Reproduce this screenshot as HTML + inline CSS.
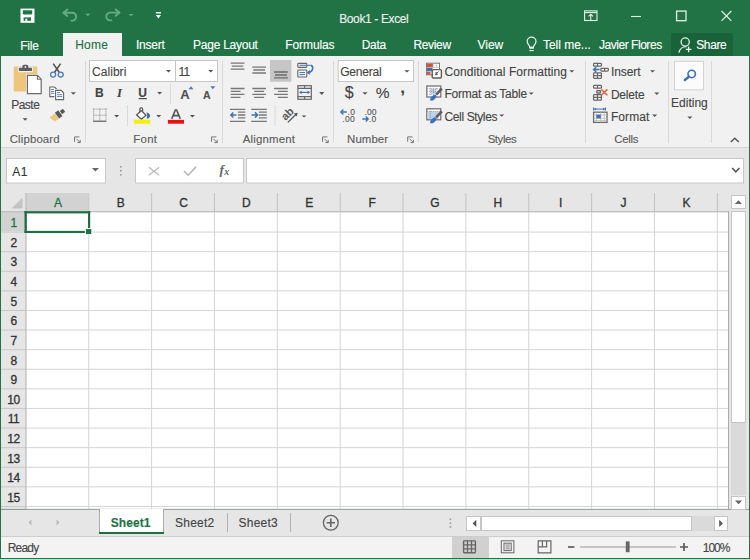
<!DOCTYPE html>
<html><head><meta charset="utf-8"><style>
html,body{margin:0;padding:0;width:750px;height:559px;overflow:hidden;}
body{position:relative;font-family:"Liberation Sans",sans-serif;}
svg{position:absolute;overflow:visible}
div{-webkit-text-stroke:0.12px currentColor}
</style></head><body>
<div style="position:absolute;left:0px;top:0px;width:750px;height:559px;background:#217346;"></div><div style="position:absolute;left:1px;top:56px;width:748px;height:91px;background:#f1f1f1;"></div><div style="position:absolute;left:63px;top:33px;width:59px;height:23px;background:#f1f1f1;"></div><div style="position:absolute;left:1px;top:147px;width:748px;height:1px;background:#d5d5d5;"></div><div style="position:absolute;left:1px;top:148px;width:748px;height:45px;background:#e6e6e6;"></div><div style="position:absolute;left:671px;top:33px;width:62px;height:23px;background:#1a6239;"></div><div style="position:absolute;left:1px;top:193px;width:748px;height:316px;background:#e6e6e6;"></div><div style="position:absolute;left:26px;top:212px;width:702px;height:297px;background:#ffffff;"></div><svg width="750" height="559" style="position:absolute;left:0;top:0"><rect x="26.50" y="212.30" width="702.00" height="297.00" fill="#ffffff"/><rect x="88.25" y="212.30" width="1.00" height="296.50" fill="#d4d4d4"/><rect x="151.11" y="212.30" width="1.00" height="296.50" fill="#d4d4d4"/><rect x="213.97" y="212.30" width="1.00" height="296.50" fill="#d4d4d4"/><rect x="276.83" y="212.30" width="1.00" height="296.50" fill="#d4d4d4"/><rect x="339.69" y="212.30" width="1.00" height="296.50" fill="#d4d4d4"/><rect x="402.55" y="212.30" width="1.00" height="296.50" fill="#d4d4d4"/><rect x="465.41" y="212.30" width="1.00" height="296.50" fill="#d4d4d4"/><rect x="528.27" y="212.30" width="1.00" height="296.50" fill="#d4d4d4"/><rect x="591.13" y="212.30" width="1.00" height="296.50" fill="#d4d4d4"/><rect x="653.99" y="212.30" width="1.00" height="296.50" fill="#d4d4d4"/><rect x="716.85" y="212.30" width="1.00" height="296.50" fill="#d4d4d4"/><rect x="26.50" y="231.55" width="702.00" height="1.00" fill="#d4d4d4"/><rect x="26.50" y="251.15" width="702.00" height="1.00" fill="#d4d4d4"/><rect x="26.50" y="270.75" width="702.00" height="1.00" fill="#d4d4d4"/><rect x="26.50" y="290.35" width="702.00" height="1.00" fill="#d4d4d4"/><rect x="26.50" y="309.95" width="702.00" height="1.00" fill="#d4d4d4"/><rect x="26.50" y="329.55" width="702.00" height="1.00" fill="#d4d4d4"/><rect x="26.50" y="349.15" width="702.00" height="1.00" fill="#d4d4d4"/><rect x="26.50" y="368.75" width="702.00" height="1.00" fill="#d4d4d4"/><rect x="26.50" y="388.35" width="702.00" height="1.00" fill="#d4d4d4"/><rect x="26.50" y="407.95" width="702.00" height="1.00" fill="#d4d4d4"/><rect x="26.50" y="427.55" width="702.00" height="1.00" fill="#d4d4d4"/><rect x="26.50" y="447.15" width="702.00" height="1.00" fill="#d4d4d4"/><rect x="26.50" y="466.75" width="702.00" height="1.00" fill="#d4d4d4"/><rect x="26.50" y="486.35" width="702.00" height="1.00" fill="#d4d4d4"/><rect x="26.50" y="505.95" width="702.00" height="1.00" fill="#d4d4d4"/><rect x="88.25" y="193.00" width="1.00" height="18.80" fill="#c2c2c2"/><rect x="151.11" y="193.00" width="1.00" height="18.80" fill="#c2c2c2"/><rect x="213.97" y="193.00" width="1.00" height="18.80" fill="#c2c2c2"/><rect x="276.83" y="193.00" width="1.00" height="18.80" fill="#c2c2c2"/><rect x="339.69" y="193.00" width="1.00" height="18.80" fill="#c2c2c2"/><rect x="402.55" y="193.00" width="1.00" height="18.80" fill="#c2c2c2"/><rect x="465.41" y="193.00" width="1.00" height="18.80" fill="#c2c2c2"/><rect x="528.27" y="193.00" width="1.00" height="18.80" fill="#c2c2c2"/><rect x="591.13" y="193.00" width="1.00" height="18.80" fill="#c2c2c2"/><rect x="653.99" y="193.00" width="1.00" height="18.80" fill="#c2c2c2"/><rect x="716.85" y="193.00" width="1.00" height="18.80" fill="#c2c2c2"/><rect x="1.00" y="231.55" width="25.00" height="1.00" fill="#c8c8c8"/><rect x="1.00" y="251.15" width="25.00" height="1.00" fill="#c8c8c8"/><rect x="1.00" y="270.75" width="25.00" height="1.00" fill="#c8c8c8"/><rect x="1.00" y="290.35" width="25.00" height="1.00" fill="#c8c8c8"/><rect x="1.00" y="309.95" width="25.00" height="1.00" fill="#c8c8c8"/><rect x="1.00" y="329.55" width="25.00" height="1.00" fill="#c8c8c8"/><rect x="1.00" y="349.15" width="25.00" height="1.00" fill="#c8c8c8"/><rect x="1.00" y="368.75" width="25.00" height="1.00" fill="#c8c8c8"/><rect x="1.00" y="388.35" width="25.00" height="1.00" fill="#c8c8c8"/><rect x="1.00" y="407.95" width="25.00" height="1.00" fill="#c8c8c8"/><rect x="1.00" y="427.55" width="25.00" height="1.00" fill="#c8c8c8"/><rect x="1.00" y="447.15" width="25.00" height="1.00" fill="#c8c8c8"/><rect x="1.00" y="466.75" width="25.00" height="1.00" fill="#c8c8c8"/><rect x="1.00" y="486.35" width="25.00" height="1.00" fill="#c8c8c8"/><rect x="1.00" y="505.95" width="25.00" height="1.00" fill="#c8c8c8"/><rect x="26.50" y="193.00" width="61.75" height="18.30" fill="#d2d2d2"/><rect x="1.00" y="212.30" width="25.00" height="18.75" fill="#d2d2d2"/><rect x="1.00" y="211.30" width="728.00" height="1.00" fill="#b0b0b0"/><rect x="25.50" y="193.00" width="1.00" height="316.00" fill="#b0b0b0"/><rect x="728.00" y="211.30" width="1.20" height="298.00" fill="#ababab"/><rect x="1.00" y="508.80" width="748.00" height="1.00" fill="#ababab"/><rect x="24.50" y="211.20" width="65.70" height="2.20" fill="#1e6e42"/><rect x="24.50" y="230.90" width="61.00" height="2.10" fill="#1e6e42"/><rect x="24.50" y="211.20" width="2.30" height="21.80" fill="#1e6e42"/><rect x="88.00" y="211.20" width="2.20" height="17.40" fill="#1e6e42"/><rect x="84.90" y="228.10" width="7.40" height="7.00" fill="#ffffff"/><rect x="85.90" y="229.10" width="5.40" height="5.00" fill="#1e6e42"/></svg><div style="position:absolute;left:729px;top:193px;width:19px;height:316px;background:#e6e6e6;"></div><div style="position:absolute;left:731px;top:211px;width:15px;height:212px;background:#ffffff;box-sizing:border-box;border:1px solid #c6c6c6"></div><div style="position:absolute;left:731px;top:423px;width:15px;height:72px;background:#dadada;"></div><div style="position:absolute;left:731px;top:195px;width:15px;height:14px;background:#ffffff;box-sizing:border-box;border:1px solid #c6c6c6"></div><div style="position:absolute;left:731px;top:496px;width:15px;height:14px;background:#ffffff;box-sizing:border-box;border:1px solid #c6c6c6"></div><div style="position:absolute;left:1px;top:510px;width:748px;height:26px;background:#e6e6e6;"></div><div style="position:absolute;left:99px;top:509px;width:65px;height:25px;background:#ababab;"></div><div style="position:absolute;left:100px;top:509px;width:63px;height:23px;background:#ffffff;"></div><div style="position:absolute;left:99px;top:532px;width:65px;height:2px;background:#1e6e42;"></div><div style="position:absolute;left:227px;top:513px;width:1px;height:19px;background:#b0b0b0;"></div><div style="position:absolute;left:290px;top:513px;width:1px;height:19px;background:#b0b0b0;"></div><div style="position:absolute;left:466px;top:516px;width:262px;height:15px;background:#dadada;"></div><div style="position:absolute;left:481px;top:516px;width:211px;height:15px;background:#ffffff;box-sizing:border-box;border:1px solid #c6c6c6"></div><div style="position:absolute;left:466px;top:516px;width:15px;height:15px;background:#ffffff;box-sizing:border-box;border:1px solid #c6c6c6"></div><div style="position:absolute;left:714px;top:516px;width:14px;height:15px;background:#ffffff;box-sizing:border-box;border:1px solid #c6c6c6"></div><div style="position:absolute;left:1px;top:537px;width:748px;height:21px;background:#f3f3f3;"></div><div style="position:absolute;left:1px;top:536px;width:748px;height:1px;background:#cdcdcd;"></div><div style="position:absolute;left:452px;top:537px;width:37px;height:21px;background:#d0d0d0;"></div><div style="position:absolute;left:37.9px;top:196px;width:40px;text-align:center;font-size:12px;line-height:14px;-webkit-text-stroke:0.3px currentColor;color:#217346">A</div><div style="position:absolute;left:100.7px;top:196px;width:40px;text-align:center;font-size:12px;line-height:14px;-webkit-text-stroke:0.3px currentColor;color:#333">B</div><div style="position:absolute;left:163.5px;top:196px;width:40px;text-align:center;font-size:12px;line-height:14px;-webkit-text-stroke:0.3px currentColor;color:#333">C</div><div style="position:absolute;left:226.4px;top:196px;width:40px;text-align:center;font-size:12px;line-height:14px;-webkit-text-stroke:0.3px currentColor;color:#333">D</div><div style="position:absolute;left:289.3px;top:196px;width:40px;text-align:center;font-size:12px;line-height:14px;-webkit-text-stroke:0.3px currentColor;color:#333">E</div><div style="position:absolute;left:352.1px;top:196px;width:40px;text-align:center;font-size:12px;line-height:14px;-webkit-text-stroke:0.3px currentColor;color:#333">F</div><div style="position:absolute;left:415.0px;top:196px;width:40px;text-align:center;font-size:12px;line-height:14px;-webkit-text-stroke:0.3px currentColor;color:#333">G</div><div style="position:absolute;left:477.8px;top:196px;width:40px;text-align:center;font-size:12px;line-height:14px;-webkit-text-stroke:0.3px currentColor;color:#333">H</div><div style="position:absolute;left:540.7px;top:196px;width:40px;text-align:center;font-size:12px;line-height:14px;-webkit-text-stroke:0.3px currentColor;color:#333">I</div><div style="position:absolute;left:603.6px;top:196px;width:40px;text-align:center;font-size:12px;line-height:14px;-webkit-text-stroke:0.3px currentColor;color:#333">J</div><div style="position:absolute;left:666.4px;top:196px;width:40px;text-align:center;font-size:12px;line-height:14px;-webkit-text-stroke:0.3px currentColor;color:#333">K</div><div style="position:absolute;left:1.5px;top:215.9px;width:24px;text-align:center;font-size:12px;line-height:14px;letter-spacing:-0.5px;-webkit-text-stroke:0.3px currentColor;color:#217346">1</div><div style="position:absolute;left:1.5px;top:235.9px;width:24px;text-align:center;font-size:12px;line-height:14px;letter-spacing:-0.5px;-webkit-text-stroke:0.3px currentColor;color:#333">2</div><div style="position:absolute;left:1.5px;top:255.4px;width:24px;text-align:center;font-size:12px;line-height:14px;letter-spacing:-0.5px;-webkit-text-stroke:0.3px currentColor;color:#333">3</div><div style="position:absolute;left:1.5px;top:275.1px;width:24px;text-align:center;font-size:12px;line-height:14px;letter-spacing:-0.5px;-webkit-text-stroke:0.3px currentColor;color:#333">4</div><div style="position:absolute;left:1.5px;top:294.7px;width:24px;text-align:center;font-size:12px;line-height:14px;letter-spacing:-0.5px;-webkit-text-stroke:0.3px currentColor;color:#333">5</div><div style="position:absolute;left:1.5px;top:314.2px;width:24px;text-align:center;font-size:12px;line-height:14px;letter-spacing:-0.5px;-webkit-text-stroke:0.3px currentColor;color:#333">6</div><div style="position:absolute;left:1.5px;top:333.9px;width:24px;text-align:center;font-size:12px;line-height:14px;letter-spacing:-0.5px;-webkit-text-stroke:0.3px currentColor;color:#333">7</div><div style="position:absolute;left:1.5px;top:353.5px;width:24px;text-align:center;font-size:12px;line-height:14px;letter-spacing:-0.5px;-webkit-text-stroke:0.3px currentColor;color:#333">8</div><div style="position:absolute;left:1.5px;top:373.1px;width:24px;text-align:center;font-size:12px;line-height:14px;letter-spacing:-0.5px;-webkit-text-stroke:0.3px currentColor;color:#333">9</div><div style="position:absolute;left:1.5px;top:392.7px;width:24px;text-align:center;font-size:12px;line-height:14px;letter-spacing:-0.5px;-webkit-text-stroke:0.3px currentColor;color:#333">10</div><div style="position:absolute;left:1.5px;top:412.2px;width:24px;text-align:center;font-size:12px;line-height:14px;letter-spacing:-0.5px;-webkit-text-stroke:0.3px currentColor;color:#333">11</div><div style="position:absolute;left:1.5px;top:431.9px;width:24px;text-align:center;font-size:12px;line-height:14px;letter-spacing:-0.5px;-webkit-text-stroke:0.3px currentColor;color:#333">12</div><div style="position:absolute;left:1.5px;top:451.5px;width:24px;text-align:center;font-size:12px;line-height:14px;letter-spacing:-0.5px;-webkit-text-stroke:0.3px currentColor;color:#333">13</div><div style="position:absolute;left:1.5px;top:471.1px;width:24px;text-align:center;font-size:12px;line-height:14px;letter-spacing:-0.5px;-webkit-text-stroke:0.3px currentColor;color:#333">14</div><div style="position:absolute;left:1.5px;top:490.7px;width:24px;text-align:center;font-size:12px;line-height:14px;letter-spacing:-0.5px;-webkit-text-stroke:0.3px currentColor;color:#333">15</div>
<svg width="750" height="559" style="position:absolute;left:0;top:0">
<!-- ===== title bar ===== -->
<!-- save -->
<rect x="20.5" y="8.6" width="14" height="14.2" fill="#fff"/>
<path d="M22.8,10.2 H32.2 V13.2 Q32.2,14.6 30.8,14.6 H24.2 Q22.8,14.6 22.8,13.2 Z" fill="#217346"/>
<rect x="23.6" y="17.4" width="7.4" height="3.4" fill="#217346"/>
<rect x="25.3" y="18.8" width="2" height="2" fill="#fff"/>
<!-- undo -->
<g stroke="#66ab83" stroke-width="1.9" fill="none" stroke-linecap="round" stroke-linejoin="round">
<path d="M67.4,9.6 L63.4,12.8 L67.4,16"/>
<path d="M63.6,12.8 H72.2 A3.9,3.9 0 0 1 72.2,20.6 H71.4"/>
<path d="M115.7,9.6 L119.5,12.6 L115.7,15.8"/>
<path d="M119.3,12.6 H110.2 A3.9,3.9 0 0 0 110.2,20.4 H111.4"/>
</g>
<path d="M85.2,13.8 H90.4 L87.8,16.3 Z" fill="#66ab83"/>
<path d="M128.6,13.9 H133.6 L131.1,16.3 Z" fill="#66ab83"/>
<!-- qat customize -->
<rect x="155.9" y="12" width="5" height="1.5" fill="#fff"/>
<path d="M155.8,15 H161 L158.4,18.4 Z" fill="#fff"/>
<!-- ribbon display options -->
<g stroke="#e4f1e8" fill="none" stroke-width="1.1">
<rect x="584.6" y="10.9" width="12.4" height="9.6"/>
<path d="M584.6,12.6 H597"/>
<path d="M590.8,20.5 V14.2 M588.6,16.4 L590.8,14.2 L593,16.4"/>
<path d="M631,16.5 H641"/>
<rect x="676.6" y="11.1" width="9.4" height="9.6" stroke-width="1.3"/>
<path d="M721.5,11 L731.4,20.9 M731.4,11 L721.5,20.9" stroke-width="1.15"/>
</g>
<!-- lightbulb -->
<g stroke="#e4f1e8" fill="none" stroke-width="1.25">
<path d="M529.9,47.3 C529.9,45.2 527.2,44.2 527.2,41.6 A4.4,4.4 0 0 1 536,41.6 C536,44.2 533.3,45.2 533.3,47.3 Z"/>
</g>
<rect x="529.4" y="46.8" width="4.4" height="2" fill="#e4f1e8"/>
<rect x="529.4" y="50" width="4.4" height="1.1" fill="#e4f1e8"/>
<!-- share person -->
<g stroke="#e4f1e8" fill="none" stroke-width="1.3">
<circle cx="685.2" cy="42" r="4.1"/>
<path d="M678.9,52.6 A7.6,7.6 0 0 1 686.4,46.6"/>
<path d="M688.6,46.6 V52.2 M685.8,49.4 H691.4"/>
</g>

<!-- ===== ribbon: clipboard ===== -->
<rect x="13.7" y="66.5" width="23.6" height="25.1" rx="0.8" fill="#eec57a"/>
<path d="M21.3,68.5 V66.4 Q21.3,63.6 24.1,63.6 H26.6 Q29.4,63.6 29.4,66.4 V67 H32.2 Q33.1,67 33.1,68 V71.2 Q33.1,72.2 32.1,72.2 H18.8 Q17.8,72.2 17.8,71.2 V68 Q17.8,67 18.8,67 H21.3 Z" fill="#f1f1f1"/>
<path d="M22.4,68 V66.4 Q22.4,64.7 24.1,64.7 H26.6 Q28.3,64.7 28.3,66.4 V68 Z" fill="#5c5c5c"/>
<rect x="18.9" y="67.7" width="13.1" height="3.4" rx="0.9" fill="#5c5c5c"/>
<circle cx="25.35" cy="66.9" r="0.9" fill="#f1f1f1"/>
<path d="M27.4,75.4 H37.4 L41.2,79.2 V93.6 H27.4 Z" fill="#fff" stroke="#f1f1f1" stroke-width="3"/>
<path d="M27.4,75.4 H37.4 L41.2,79.2 V93.6 H27.4 Z" fill="#fff" stroke="#6b6b6b" stroke-width="1.2"/>
<path d="M37.4,75.4 V79.2 H41.2" fill="none" stroke="#6b6b6b" stroke-width="1.1"/>
<path d="M22.6,118.2 H27.6 L25.1,120.8 Z" fill="#555"/>
<!-- scissors -->
<path d="M53.2,63.6 L59.2,72.3 M60.6,63.6 L54.6,72.3" stroke="#555" stroke-width="1.6" fill="none"/>
<circle cx="53.1" cy="74.6" r="2.5" stroke="#4a78b8" stroke-width="1.3" fill="#f1f1f1"/>
<circle cx="60.7" cy="74.6" r="2.5" stroke="#4a78b8" stroke-width="1.3" fill="#f1f1f1"/>
<!-- copy -->
<path d="M49.8,87 H54.6 L56.6,89 V96.6 H49.8 Z" fill="#fff" stroke="#666" stroke-width="1.1"/>
<path d="M51,89.4 H54 M51,91.5 H54.5 M51,93.4 H54.5" stroke="#4a78b8" stroke-width="0.9"/>
<path d="M55.6,90.4 H61.2 L63.6,92.8 V99.6 H55.6 Z" fill="#fff" stroke="#f1f1f1" stroke-width="2.6"/>
<path d="M55.6,90.4 H61.2 L63.6,92.8 V99.6 H55.6 Z" fill="#fff" stroke="#666" stroke-width="1.1"/>
<path d="M57,92.6 H60 M57,94.7 H62.3 M57,96.6 H62.3" stroke="#4a78b8" stroke-width="0.9"/>
<path d="M70.8,92.3 H75.8 L73.3,94.8 Z" fill="#555"/>
<!-- format painter -->
<g transform="rotate(-37 58.5 114.5)">
<path d="M49.6,111.6 H56.2 V118 H51.4 Z" fill="#eec57a"/>
<rect x="56.6" y="111" width="4.2" height="7" fill="#585858"/>
<rect x="61.6" y="112.6" width="3.8" height="3.8" fill="#585858"/>
</g>
<!-- launchers -->
<g stroke="#777" stroke-width="1" fill="none">
<path d="M74.5,141.8 V136.9 H79.4 M76.3,138.7 L80.2,142.6 M80.2,139.8 V142.6 H77.4"/>
<path d="M211.5,141.8 V136.9 H216.4 M213.3,138.7 L217.2,142.6 M217.2,139.8 V142.6 H214.4"/>
<path d="M322.5,141.8 V136.9 H327.4 M324.3,138.7 L328.2,142.6 M328.2,139.8 V142.6 H325.4"/>
<path d="M407.7,141.8 V136.9 H412.6 M409.5,138.7 L413.4,142.6 M413.4,139.8 V142.6 H410.6"/>
</g>
<!-- group separators -->
<g fill="#dadada">
<rect x="85" y="61" width="1" height="82"/>
<rect x="222" y="61" width="1" height="82"/>
<rect x="333" y="61" width="1" height="82"/>
<rect x="418" y="61" width="1" height="82"/>
<rect x="585" y="61" width="1" height="82"/>
<rect x="668" y="61" width="1" height="82"/>
<rect x="711" y="61" width="1" height="82"/>
<rect x="170" y="83" width="1" height="21"/>
<rect x="127" y="105" width="1" height="21"/>
<rect x="274.5" y="105" width="1" height="21"/>
</g>

<!-- ===== font group ===== -->
<rect x="89.5" y="60.5" width="86" height="21" fill="#fff" stroke="#c6c6c6"/>
<rect x="175.5" y="60.5" width="42" height="21" fill="#fff" stroke="#c6c6c6"/>
<path d="M166,70 H171 L168.5,72.5 Z M208.2,70 H213.2 L210.7,72.5 Z" fill="#555"/>
<path d="M157.1,92 H162.1 L159.6,94.6 Z M114.1,115 H119.1 L116.6,117.5 Z M156.2,115 H161.2 L158.7,117.5 Z M189.9,115 H194.9 L192.4,117.5 Z" fill="#555"/>
<rect x="138.7" y="98" width="8.1" height="1.2" fill="#444"/>
<!-- grow/shrink triangles -->
<path d="M188.5,89.2 L191,86.2 L193.5,89.2 Z" fill="#4a78b8"/>
<path d="M210.3,86.2 H215.3 L212.8,89.2 Z" fill="#4a78b8"/>
<!-- borders -->
<g stroke="#888" stroke-width="1" stroke-dasharray="1 1" fill="none">
<path d="M93.6,108.6 V121 M106,108.6 V121 M93.6,109.1 H106.5 M99.8,108.6 V121 M93.6,115.2 H106.5"/>
</g>
<rect x="93.1" y="120.6" width="13.2" height="1.3" fill="#666"/>
<!-- fill bucket -->
<path d="M141.4,110.6 L146,115.2 L141.4,119.2 L136.6,115 Z" fill="#fff" stroke="#5a5a5a" stroke-width="1.3" stroke-linejoin="round"/>
<path d="M139.9,112.2 V108.8 Q139.9,107.9 140.8,107.9 H141.6 Q142.6,107.9 142.6,108.9 V111.6" fill="none" stroke="#5a5a5a" stroke-width="1.2"/>
<path d="M146.4,112.2 Q150.6,113.4 150,116.4 Q149.2,118.6 146.8,118.8 Q147.8,115.4 146.4,112.2 Z" fill="#3d6eb0"/>
<rect x="133.9" y="119.7" width="16.4" height="4" fill="#f5f000"/>
<rect x="167.9" y="119.9" width="16.1" height="3.8" fill="#e81010"/>
<path d="M171.7,118.9 L175.4,110 H176.6 L180.3,118.9 M173.2,115.6 H178.8" stroke="#555" stroke-width="1.6" fill="none"/>

<!-- ===== alignment group ===== -->
<rect x="270" y="60" width="21.4" height="21.8" fill="#c6c6c6"/>
<g stroke="#777" stroke-width="1.3" fill="none">
<path d="M230.7,63.1 H244.5 M231.8,66.2 H243.3 M230.7,69.2 H244.5"/>
<path d="M252.3,67.1 H266 M253.3,70 H265 M252.3,73 H266"/>
<path d="M274.1,72 H287.8 M275,75 H286.9 M274.1,77.9 H287.8" stroke="#6a6a6a"/>
<path d="M230.7,88.5 H244.5 M230.7,91.4 H240.5 M230.7,94.4 H244.5 M230.7,97.4 H240.5"/>
<path d="M252.3,88.5 H266 M254.2,91.4 H264.1 M252.3,94.4 H266 M254.2,97.4 H264.1"/>
<path d="M274.1,88.5 H287.8 M277.8,91.4 H287.8 M274.1,94.4 H287.8 M277.8,97.4 H287.8"/>
<path d="M230,109.4 H245.3 M237.9,112.2 H245.3 M237.9,115 H245.3 M237.9,117.9 H245.3 M230,121.3 H245.3"/>
<path d="M251.2,109.4 H266.8 M258.9,112.2 H266.8 M258.9,115 H266.8 M258.9,117.9 H266.8 M251.2,121.3 H266.8"/>
</g>
<g stroke="#3d72b8" stroke-width="1.5" fill="none">
<path d="M230.8,115 H236.5 M233.3,112.4 L230.8,115 L233.3,117.6"/>
<path d="M251.5,115 H257.6 M255,112.4 L257.6,115 L255,117.6"/>
</g>
<!-- wrap text -->
<rect x="297.8" y="63.4" width="9" height="4" rx="0.8" fill="none" stroke="#666" stroke-width="1.1"/>
<rect x="297.8" y="70" width="9" height="7" rx="0.8" fill="none" stroke="#666" stroke-width="1.1"/>
<path d="M299.5,65.3 H310.8 M299.5,72.5 H305 M299.5,74.5 H305" stroke="#4a78b8" stroke-width="1"/>
<path d="M310.8,65.3 Q313.5,66.5 312.5,69.5 Q311.5,72.3 308,72.5" stroke="#3d72b8" stroke-width="1.5" fill="none"/>
<path d="M307,72.5 L309.8,70 V75 Z" fill="#3d72b8"/>
<!-- merge -->
<rect x="297.9" y="85.7" width="13.4" height="13.6" fill="none" stroke="#666" stroke-width="1.2"/>
<path d="M297.9,88.4 H311.3 M297.9,96.6 H311.3 M304.6,85.7 V88.4 M304.6,96.6 V99.3" stroke="#666" stroke-width="1.1"/>
<path d="M299.6,92.4 H309.6" stroke="#3d72b8" stroke-width="1.2"/>
<path d="M299.3,92.4 L301.6,90.6 V94.2 Z M309.9,92.4 L307.6,90.6 V94.2 Z" fill="#3d72b8"/>
<path d="M319.2,92 H324.3 L321.75,94.9 Z" fill="#555"/>
<!-- orientation -->
<text x="0" y="0" transform="translate(285.5,121) rotate(-45)" font-family="Liberation Sans" font-size="11" fill="#555" font-weight="bold">ab</text>
<path d="M287.8,122.4 L296.6,113.8" stroke="#555" stroke-width="1.3"/>
<path d="M297.6,112.8 L293.9,113.6 L296.8,116.5 Z" fill="#555"/>
<path d="M301.7,115.4 H306.3 L304,117.6 Z" fill="#555"/>

<!-- ===== number group ===== -->
<rect x="338.2" y="60.5" width="75.3" height="21" fill="#fff" stroke="#c6c6c6"/>
<path d="M404.3,70.2 H409.6 L406.95,72.6 Z M362.5,92.2 H367.5 L365,94.8 Z" fill="#555"/>
<path d="M340.9,112 H346.8 M343.3,109.6 L340.9,112 L343.3,114.4" stroke="#3d72b8" stroke-width="1.4" fill="none"/>
<path d="M362.3,119 H368.2 M365.8,116.6 L368.2,119 L365.8,121.4" stroke="#3d72b8" stroke-width="1.4" fill="none"/>

<!-- ===== styles group ===== -->
<!-- conditional formatting -->
<rect x="426.5" y="63.2" width="13" height="11.6" fill="#fff" stroke="#777" stroke-width="1"/>
<rect x="427" y="63.7" width="6" height="3.6" fill="#d9532e"/>
<rect x="427" y="67.7" width="5.5" height="3.4" fill="#3a70b5"/>
<rect x="427" y="71.5" width="3.5" height="3" fill="#d9532e"/>
<path d="M433.3,63.5 V67.5 M436.4,63.5 V67.5 M426.5,67.5 H439.5 M426.5,71.3 H432" stroke="#bbb" stroke-width="0.7"/>
<rect x="432.2" y="69.6" width="9.2" height="8.4" rx="1" fill="#fff" stroke="#5c5c5c" stroke-width="1.4"/>
<path d="M435,74.8 L438.6,71.6 M435.2,72.8 H437.6 M435.2,74.6 H437.8" stroke="#555" stroke-width="1"/>
<!-- format as table & cell styles -->
<g>
<rect x="426.8" y="86" width="14" height="11" fill="#fff" stroke="#6a6a6a" stroke-width="1.2"/>
<rect x="430.5" y="88.8" width="6" height="5" fill="#bcd0ea"/>
<path d="M427,88.8 H440.6 M427,91.5 H436 M427,94.2 H433 M430.3,86 V97 M433.4,86 V97 M436.6,86 V90" stroke="#9a9a9a" stroke-width="0.8" stroke-dasharray="1.2 0.8"/>
<path d="M441.8,88.6 L436.2,94.6" stroke="#5c5c5c" stroke-width="2.6"/>
<ellipse cx="433.4" cy="97.6" rx="3.7" ry="2" transform="rotate(-45 433.4 97.6)" fill="#3a72ba"/><path d="M429.8,100.8 L431.5,97.5 L433,99.2 Z" fill="#3a72ba"/>
</g>
<g>
<rect x="426.8" y="108.8" width="14" height="11" fill="#fff" stroke="#6a6a6a" stroke-width="1.2"/>
<rect x="427.6" y="111.4" width="11" height="7.6" fill="#bcd0ea"/>
<path d="M427,111.4 H440.6 M430.3,108.8 V119.8" stroke="#9a9a9a" stroke-width="0.8" stroke-dasharray="1.2 0.8"/>
<path d="M441.8,111.4 L436.2,117.4" stroke="#5c5c5c" stroke-width="2.6"/>
<ellipse cx="433.4" cy="120.4" rx="3.7" ry="2" transform="rotate(-45 433.4 120.4)" fill="#3a72ba"/><path d="M429.8,123.6 L431.5,120.3 L433,122 Z" fill="#3a72ba"/>
</g>
<path d="M569.3,70.2 H574.3 L571.8,72.6 Z M528.7,92.4 H533.7 L531.2,94.8 Z M499.3,114.4 H504.3 L501.8,116.8 Z" fill="#555"/>

<!-- ===== cells group ===== -->
<g stroke="#666" stroke-width="1.3" fill="#fff">
<rect x="593.6" y="63.4" width="7.8" height="2.8" rx="0.8"/>
<rect x="600.9" y="68.3" width="7.4" height="2.8" rx="0.8"/>
<rect x="593.6" y="72.9" width="7.8" height="5.4" rx="0.8"/>
<path d="M597.5,63.4 V66.2 M604.6,68.3 V71.1 M593.6,75.6 H601.4 M597.5,72.9 V78.3" fill="none"/>
</g>
<path d="M593.6,69.6 H599.6 M596.2,67.2 L593.6,69.6 L596.2,72" stroke="#3d72b8" stroke-width="1.5" fill="none"/>
<g stroke="#666" stroke-width="1.3" fill="#fff">
<rect x="593.6" y="85.4" width="7.8" height="2.8" rx="0.8"/>
<rect x="596.8" y="90.6" width="3.6" height="2.6" rx="0.6" fill="#cfdcee"/>
<rect x="593.6" y="94.6" width="7.8" height="5.6" rx="0.8"/>
<path d="M597.5,85.4 V88.2 M593.6,97.4 H601.4 M597.5,94.6 V100.2" fill="none"/>
</g>
<path d="M601.2,89.4 L607.4,95.2 M607.4,89.4 L601.2,95.2" stroke="#e0643c" stroke-width="1.5"/>
<rect x="593.6" y="112.2" width="13.4" height="10.2" fill="#fff" stroke="#666" stroke-width="1.3"/>
<path d="M593.6,115 H607 M593.6,118.4 H607 M593.6,120.6 H607 M596.4,112.2 V122.4 M600.8,112.2 V122.4 M604.4,112.2 V122.4" stroke="#b8b8b8" stroke-width="0.8"/>
<rect x="596.4" y="114.6" width="4.4" height="3.8" fill="#3a70b5"/>
<path d="M594.2,109.1 H605" stroke="#3d72b8" stroke-width="1"/>
<path d="M593.6,107.6 V110.6 M605.4,107.6 V110.6" stroke="#3d72b8" stroke-width="1.1"/>
<path d="M594.2,109.1 L596.2,107.7 V110.5 Z M605,109.1 L603,107.7 V110.5 Z" fill="#3d72b8"/>
<path d="M650,70.2 H655 L652.5,72.6 Z M654.3,92.6 H659.3 L656.8,95 Z M652.2,114.6 H657.2 L654.7,117 Z" fill="#555"/>

<!-- ===== editing ===== -->
<rect x="674.5" y="61.3" width="29" height="28.5" fill="#fbfbfb" stroke="#d2d2d2"/>
<circle cx="691.7" cy="73.9" r="3.7" fill="none" stroke="#3d6eb0" stroke-width="1.6"/>
<path d="M688.9,76.6 L684.9,80" stroke="#3d6eb0" stroke-width="2.4" stroke-linecap="round"/>
<path d="M687.4,116.4 H692.4 L689.9,118.9 Z" fill="#555"/>
<path d="M730.8,142 L734.8,138.2 L738.8,142" stroke="#555" stroke-width="1.4" fill="none"/>

<!-- ===== formula bar ===== -->
<rect x="6.5" y="158.5" width="99" height="24.5" fill="#fff" stroke="#c8c8c8"/>
<path d="M91.9,168 H99 L95.45,171.6 Z" fill="#666"/>
<g fill="#999"><rect x="120" y="166" width="1.6" height="1.6"/><rect x="120" y="170" width="1.6" height="1.6"/><rect x="120" y="174" width="1.6" height="1.6"/></g>
<rect x="135.5" y="158.5" width="108" height="24.5" fill="#fff" stroke="#c8c8c8"/>
<path d="M148.8,167.2 L159.2,175.3 M159.2,167.2 L148.8,175.3" stroke="#b8b8b8" stroke-width="1.2"/>
<path d="M184,171 L188.2,175.2 L196.2,166.6" stroke="#b8b8b8" stroke-width="1.6" fill="none"/>
<text x="219.6" y="173.6" font-family="Liberation Serif" font-style="italic" font-weight="bold" font-size="13.5" fill="#666">f</text><text x="224.2" y="174.6" font-family="Liberation Serif" font-style="italic" font-weight="bold" font-size="10" fill="#666">x</text>
<rect x="246.5" y="158.5" width="497" height="24.5" fill="#fff" stroke="#c8c8c8"/>
<path d="M732.2,168 L735.8,171.8 L739.4,168" stroke="#555" stroke-width="1.6" fill="none"/>

<!-- ===== sheet area extras ===== -->
<path d="M22.6,197.6 V208.6 H11.4 Z" fill="#c4c4c4"/>
<path d="M734.9,204.1 L738.45,200.3 L742,204.1 Z" fill="#666"/>
<path d="M735,500.5 L738.5,504.3 L742,500.5 Z" fill="#666"/>
<path d="M736,202 L738.5,199.5 L741,202 Z" fill="none"/>
<g fill="#b8b8b8"><path d="M31.5,519.5 L28.5,522.5 L31.5,525.5 Z"/><path d="M56.5,519.5 L59.5,522.5 L56.5,525.5 Z"/></g>
<circle cx="330.8" cy="522.7" r="7.4" fill="none" stroke="#666" stroke-width="1.3"/>
<path d="M326.6,522.7 H335 M330.8,518.5 V526.9" stroke="#666" stroke-width="1.6"/>
<g fill="#999"><rect x="449.6" y="518.6" width="1.6" height="1.6"/><rect x="449.6" y="522.4" width="1.6" height="1.6"/><rect x="449.6" y="526.2" width="1.6" height="1.6"/></g>
<path d="M476.3,519.8 L472.6,523.4 L476.3,527 Z" fill="#555"/>
<path d="M719.2,519.8 L722.9,523.4 L719.2,527 Z" fill="#555"/>
<!-- status bar view icons -->
<g stroke="#666" stroke-width="1" fill="none">
<rect x="463.6" y="540.9" width="11.8" height="11.8" rx="0.6" stroke-width="1.4"/>
<path d="M467.5,540.8 V552.8 M471.5,540.8 V552.8 M463.5,544.8 H475.5 M463.5,548.8 H475.5" stroke-width="1.3"/>
<rect x="501.3" y="540.8" width="12.6" height="12"/>
<rect x="504" y="543.2" width="7.2" height="7.4"/>
<path d="M505.5,545 H509.8 M505.5,546.9 H509.8 M505.5,548.8 H509.8" stroke-width="0.8"/>
<path d="M538.2,552.8 V540.8 H550.9 V552.8 Z M538.2,546.8 H546.6 V540.8 M542.4,540.8 V546.8" stroke-width="1.2"/>
</g>
<path d="M568,547 H574.4" stroke="#555" stroke-width="1.6"/>
<path d="M580,547 H676" stroke="#999" stroke-width="1"/>
<rect x="625.8" y="541.4" width="3.8" height="10.8" fill="#666"/>
<path d="M680,547 H688 M684,543 V551" stroke="#555" stroke-width="1.6"/>
</svg>

<div style="position:absolute;left:339.20px;top:12.64px;font-size:12px;line-height:12px;color:#f0f0f0;font-weight:normal;letter-spacing:-0.373px;white-space:pre;">Book1 - Excel</div><div style="position:absolute;left:20.20px;top:40.44px;font-size:12px;line-height:12px;color:#ffffff;font-weight:normal;letter-spacing:-0.186px;white-space:pre;">File</div><div style="position:absolute;left:75.20px;top:39.44px;font-size:12px;line-height:12px;color:#217346;font-weight:normal;letter-spacing:0.221px;white-space:pre;">Home</div><div style="position:absolute;left:135.90px;top:39.44px;font-size:12px;line-height:12px;color:#ffffff;font-weight:normal;letter-spacing:-0.203px;white-space:pre;">Insert</div><div style="position:absolute;left:193.10px;top:39.44px;font-size:12px;line-height:12px;color:#ffffff;font-weight:normal;letter-spacing:-0.254px;white-space:pre;">Page Layout</div><div style="position:absolute;left:285.30px;top:39.44px;font-size:12px;line-height:12px;color:#ffffff;font-weight:normal;letter-spacing:-0.102px;white-space:pre;">Formulas</div><div style="position:absolute;left:361.70px;top:39.44px;font-size:12px;line-height:12px;color:#ffffff;font-weight:normal;letter-spacing:-0.265px;white-space:pre;">Data</div><div style="position:absolute;left:413.40px;top:39.44px;font-size:12px;line-height:12px;color:#ffffff;font-weight:normal;letter-spacing:-0.327px;white-space:pre;">Review</div><div style="position:absolute;left:477.60px;top:39.44px;font-size:12px;line-height:12px;color:#ffffff;font-weight:normal;letter-spacing:-0.074px;white-space:pre;">View</div><div style="position:absolute;left:542.90px;top:39.44px;font-size:12px;line-height:12px;color:#ffffff;font-weight:normal;letter-spacing:-0.012px;white-space:pre;">Tell me...</div><div style="position:absolute;left:598.90px;top:39.44px;font-size:12px;line-height:12px;color:#ffffff;font-weight:normal;letter-spacing:-0.453px;white-space:pre;">Javier Flores</div><div style="position:absolute;left:696.20px;top:39.44px;font-size:12px;line-height:12px;color:#ffffff;font-weight:normal;letter-spacing:-0.366px;white-space:pre;">Share</div><div style="position:absolute;left:11.20px;top:99.14px;font-size:12px;line-height:12px;color:#444444;font-weight:normal;letter-spacing:-0.498px;white-space:pre;">Paste</div><div style="position:absolute;left:9.70px;top:133.75px;font-size:11.4px;line-height:11.4px;color:#5a5a5a;font-weight:normal;letter-spacing:0.148px;white-space:pre;">Clipboard</div><div style="position:absolute;left:92.00px;top:65.84px;font-size:12px;line-height:12px;color:#444444;font-weight:normal;letter-spacing:0.055px;white-space:pre;">Calibri</div><div style="position:absolute;left:178.40px;top:65.84px;font-size:12px;line-height:12px;color:#444444;font-weight:normal;letter-spacing:-0.584px;white-space:pre;">11</div><div style="position:absolute;left:133.20px;top:133.75px;font-size:11.4px;line-height:11.4px;color:#5a5a5a;font-weight:normal;letter-spacing:0.326px;white-space:pre;">Font</div><div style="position:absolute;left:242.70px;top:133.75px;font-size:11.4px;line-height:11.4px;color:#5a5a5a;font-weight:normal;letter-spacing:0.205px;white-space:pre;">Alignment</div><div style="position:absolute;left:340.20px;top:65.64px;font-size:12px;line-height:12px;color:#444444;font-weight:normal;letter-spacing:-0.215px;white-space:pre;">General</div><div style="position:absolute;left:347.10px;top:133.75px;font-size:11.4px;line-height:11.4px;color:#5a5a5a;font-weight:normal;letter-spacing:0.097px;white-space:pre;">Number</div><div style="position:absolute;left:444.50px;top:65.84px;font-size:12px;line-height:12px;color:#444444;font-weight:normal;letter-spacing:0.085px;white-space:pre;">Conditional Formatting</div><div style="position:absolute;left:444.50px;top:88.34px;font-size:12px;line-height:12px;color:#444444;font-weight:normal;letter-spacing:-0.229px;white-space:pre;">Format as Table</div><div style="position:absolute;left:444.50px;top:110.64px;font-size:12px;line-height:12px;color:#444444;font-weight:normal;letter-spacing:-0.372px;white-space:pre;">Cell Styles</div><div style="position:absolute;left:487.70px;top:133.75px;font-size:11.4px;line-height:11.4px;color:#5a5a5a;font-weight:normal;letter-spacing:-0.422px;white-space:pre;">Styles</div><div style="position:absolute;left:610.90px;top:66.04px;font-size:12px;line-height:12px;color:#444444;font-weight:normal;letter-spacing:-0.086px;white-space:pre;">Insert</div><div style="position:absolute;left:610.90px;top:88.64px;font-size:12px;line-height:12px;color:#444444;font-weight:normal;letter-spacing:-0.198px;white-space:pre;">Delete</div><div style="position:absolute;left:610.90px;top:110.94px;font-size:12px;line-height:12px;color:#444444;font-weight:normal;letter-spacing:0.081px;white-space:pre;">Format</div><div style="position:absolute;left:614.20px;top:133.75px;font-size:11.4px;line-height:11.4px;color:#5a5a5a;font-weight:normal;letter-spacing:-0.266px;white-space:pre;">Cells</div><div style="position:absolute;left:671.00px;top:97.34px;font-size:12px;line-height:12px;color:#444444;font-weight:normal;letter-spacing:0.014px;white-space:pre;">Editing</div><div style="position:absolute;left:12.20px;top:166.14px;font-size:12px;line-height:12px;color:#333;font-weight:normal;letter-spacing:0.606px;white-space:pre;">A1</div><div style="position:absolute;left:110.80px;top:517.04px;font-size:12px;line-height:12px;color:#217346;font-weight:bold;letter-spacing:0.040px;white-space:pre;">Sheet1</div><div style="position:absolute;left:175.10px;top:516.64px;font-size:12px;line-height:12px;color:#444444;font-weight:normal;letter-spacing:0.209px;white-space:pre;">Sheet2</div><div style="position:absolute;left:238.50px;top:516.64px;font-size:12px;line-height:12px;color:#444444;font-weight:normal;letter-spacing:0.226px;white-space:pre;">Sheet3</div><div style="position:absolute;left:7.80px;top:541.64px;font-size:12px;line-height:12px;color:#444444;font-weight:normal;letter-spacing:-0.838px;white-space:pre;">Ready</div><div style="position:absolute;left:702.80px;top:541.64px;font-size:12px;line-height:12px;color:#444444;font-weight:normal;letter-spacing:-1.026px;white-space:pre;">100%</div><div style="position:absolute;left:94.90px;top:87.34px;font-size:12px;line-height:12px;color:#444;font-weight:bold;letter-spacing:-0.272px;white-space:pre;">B</div><div style="position:absolute;left:117.10px;top:86.92px;font-size:12.5px;line-height:12.5px;color:#444;font-weight:bold;letter-spacing:4.616px;white-space:pre;font-family:'Liberation Serif';font-style:italic">I</div><div style="position:absolute;left:138.20px;top:87.34px;font-size:12px;line-height:12px;color:#444;font-weight:bold;letter-spacing:0.028px;white-space:pre;">U</div><div style="position:absolute;left:180.20px;top:87.60px;font-size:13px;line-height:13px;color:#505050;font-weight:bold;letter-spacing:0.909px;white-space:pre;">A</div><div style="position:absolute;left:202.90px;top:89.71px;font-size:10.5px;line-height:10.5px;color:#505050;font-weight:bold;letter-spacing:0.606px;white-space:pre;">A</div><div style="position:absolute;left:344.70px;top:84.76px;font-size:16px;line-height:16px;color:#444;font-weight:normal;letter-spacing:0.094px;white-space:pre;">$</div><div style="position:absolute;left:375.70px;top:85.18px;font-size:15.5px;line-height:15.5px;color:#444;font-weight:normal;letter-spacing:-0.597px;white-space:pre;">%</div><div style="position:absolute;left:400.20px;top:78.91px;font-size:17px;line-height:17px;color:#444;font-weight:bold;letter-spacing:0.466px;white-space:pre;">,</div><div style="position:absolute;left:347.50px;top:108.10px;font-size:8.5px;line-height:8.5px;color:#555;font-weight:normal;letter-spacing:0.353px;white-space:pre;">.0</div><div style="position:absolute;left:342.20px;top:115.10px;font-size:8.5px;line-height:8.5px;color:#555;font-weight:normal;letter-spacing:0.424px;white-space:pre;">.00</div><div style="position:absolute;left:364.40px;top:108.10px;font-size:8.5px;line-height:8.5px;color:#555;font-weight:normal;letter-spacing:0.157px;white-space:pre;">.00</div><div style="position:absolute;left:368.90px;top:115.10px;font-size:8.5px;line-height:8.5px;color:#555;font-weight:normal;letter-spacing:0.353px;white-space:pre;">.0</div>
</body></html>
